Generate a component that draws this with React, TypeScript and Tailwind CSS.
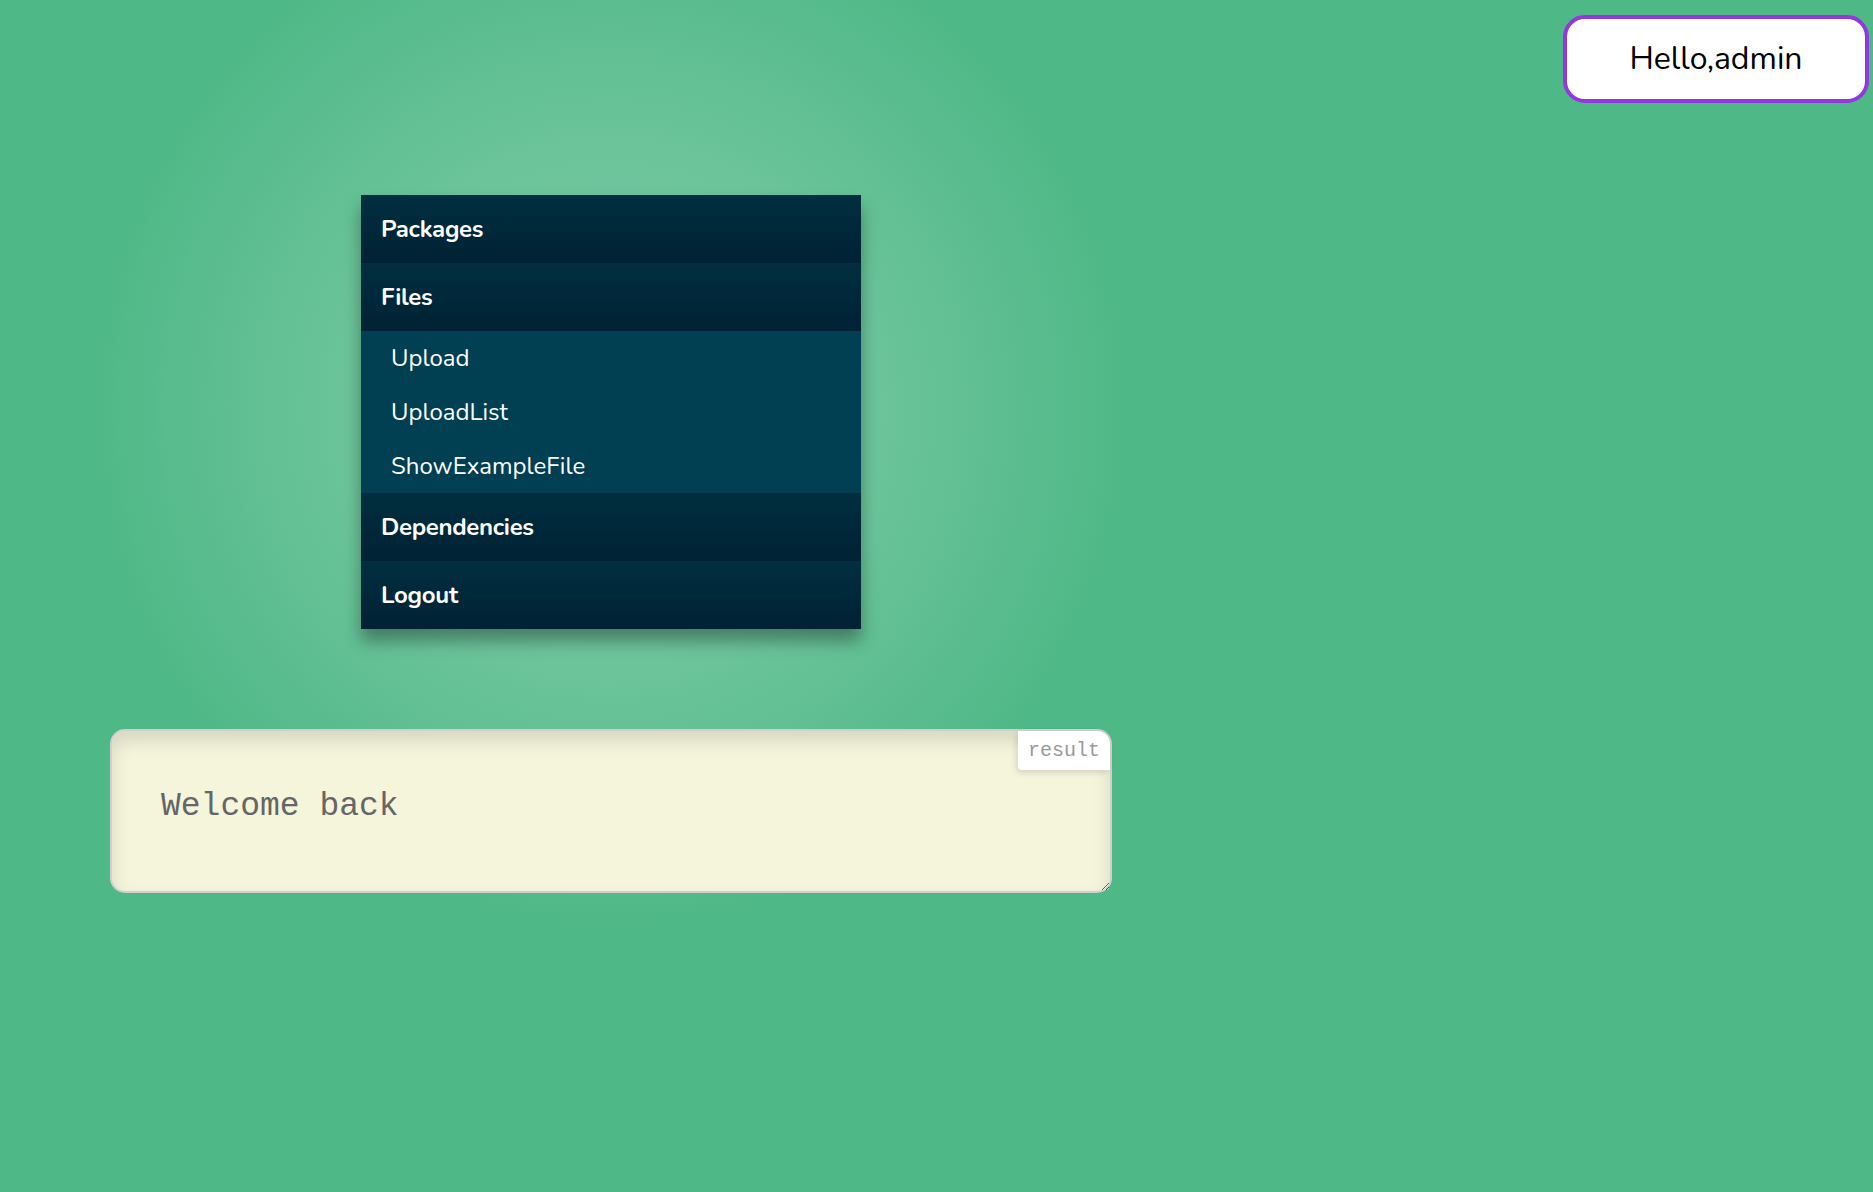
const menu = [
  { title: "Packages", children: [] as string[] },
  { title: "Files", children: ["Upload", "UploadList", "ShowExampleFile"] },
  { title: "Dependencies", children: [] as string[] },
  { title: "Logout", children: [] as string[] },
];

const App = () => {
  return (
    <div className="w-full min-h-[1192px] bg-[#4fb887] bg-[radial-gradient(circle_at_610px_410px,#75c9a2_0px,#6cc49b_260px,#4fb887_520px)] font-['Nunito','Lato',sans-serif] overflow-hidden">
      <div className="flex justify-end pt-[15px] pr-[4px]">
        <div className="w-[306px] h-[88px] flex items-center justify-center bg-white border-[4px] border-[#9238dc] rounded-[22px] text-[32px] text-black">
          Hello,admin
        </div>
      </div>

      <div className="ml-[361px] mt-[92px] w-[500px] shadow-[0_12px_16px_rgba(0,0,0,0.35)]">
        {menu.map((item) => (
          <div key={item.title}>
            <div className="h-[68px] flex items-center pl-[20px] bg-[linear-gradient(180deg,#002f40,#002234)] text-white text-[24px] font-bold tracking-[-0.3px]">
              {item.title}
            </div>
            {item.children.length > 0 && (
              <div className="bg-[#004052]">
                {item.children.map((c) => (
                  <div
                    key={c}
                    className="h-[54px] flex items-center pl-[30px] text-white text-[24px]"
                  >
                    {c}
                  </div>
                ))}
              </div>
            )}
          </div>
        ))}
      </div>

      <div className="relative ml-[110px] mt-[100px] w-[1002px] h-[164px]">
        <textarea
          defaultValue="Welcome back"
          className="w-full h-full block bg-[#f5f5dc] border-2 border-[#cfcfcf] rounded-[15px] pt-[51px] pl-[49px] pr-[20px] font-['Liberation_Mono',monospace] text-[33px] text-[#666] outline-none shadow-[inset_0_10px_18px_rgba(0,0,0,0.12)]"
        />
        <div className="absolute top-[2px] right-[2px] w-[92px] h-[39px] flex items-center justify-center bg-white rounded-tr-[13px] rounded-bl-[4px] shadow-[-2px_3px_6px_rgba(0,0,0,0.12)] font-['Liberation_Mono',monospace] text-[20px] text-[#999]">
          result
        </div>
      </div>
    </div>
  );
};

export default App;
